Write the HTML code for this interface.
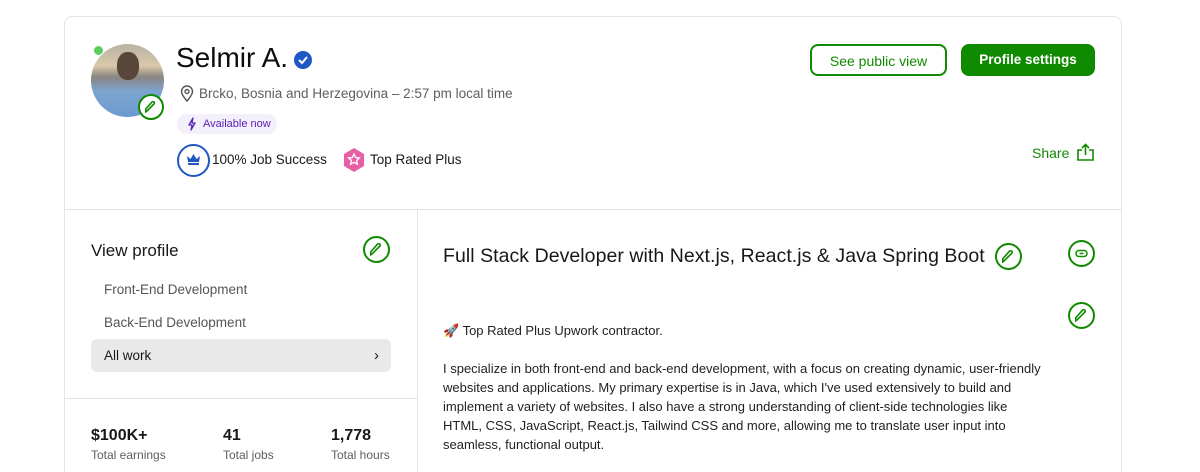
<!DOCTYPE html>
<html style="width:1200px;height:472px;overflow:hidden"><head><style>
*{box-sizing:border-box;margin:0;padding:0}
body{width:1200px;height:472px;overflow:hidden;background:#fff;font-family:"Liberation Sans",Arial,sans-serif;color:#181818;position:relative}
.card{position:absolute;left:64px;top:16px;width:1058px;height:470px;border:1px solid #e4e4e4;border-radius:8px}
.abs{position:absolute}
.pen{position:absolute;width:27px;height:27px;border:2px solid #108a00;border-radius:50%;background:#fff}
.pen svg{position:absolute;left:5px;top:5px}
.btn{position:absolute;height:32px;border-radius:8px;font-size:14px;text-align:center;line-height:30px}
.g{color:#108a00}
</style></head><body>
<div class="card"></div>
<div class="abs" style="left:64px;top:209px;width:1058px;height:1px;background:#e4e4e4"></div>
<div class="abs" style="left:417px;top:210px;width:1px;height:262px;background:#e4e4e4"></div>
<div class="abs" style="left:64px;top:398px;width:353px;height:1px;background:#e4e4e4"></div>

<div class="abs" style="left:91px;top:44px;width:73px;height:73px;border-radius:50%;background:linear-gradient(180deg,#b9b3a6 0%,#d8c8a8 30%,#8a8580 45%,#7da4cf 65%,#6b9ad0 100%)"></div>
<div class="abs" style="left:117px;top:52px;width:22px;height:28px;border-radius:45%;background:#5a4638"></div>
<div class="abs" style="left:93px;top:45px;width:11px;height:11px;border-radius:50%;background:#5ccd5c;border:1px solid #fff"></div>
<div class="pen" style="left:138px;top:94px;width:26px;height:26px"><svg width="12" height="12" viewBox="0 0 12 12"><path d="M2 10L9 3a1.4 1.4 0 0 0-2-2L0.8 8 0.5 11z" fill="none" stroke="#108a00" stroke-width="1.6"/></svg></div>

<div class="abs" style="left:176px;top:42px;font-size:28px;color:#0d0d0d">Selmir A.</div>
<svg class="abs" style="left:293px;top:50px" width="20" height="20" viewBox="0 0 20 20"><circle cx="10" cy="10" r="9" fill="#1f57c3"/><path d="M6 10l3 3 5-6" stroke="#fff" stroke-width="2" fill="none"/></svg>

<svg class="abs" style="left:180px;top:85px" width="14" height="17" viewBox="0 0 14 17"><path d="M7 16S1.5 10 1.5 6.5a5.5 5.5 0 0 1 11 0C12.5 10 7 16 7 16z" fill="none" stroke="#555" stroke-width="1.4"/><circle cx="7" cy="6.5" r="2" fill="none" stroke="#555" stroke-width="1.4"/></svg>
<div class="abs" style="left:199px;top:86px;font-size:13.5px;color:#5e5e5e">Brcko, Bosnia and Herzegovina – 2:57 pm local time</div>

<div class="abs" style="left:177px;top:114px;width:100px;height:20px;border-radius:10px;background:#f3f0fc;font-size:11px;color:#5b21b6;line-height:20px;padding-left:26px">Available now</div>
<svg class="abs" style="left:187px;top:117px" width="10" height="14" viewBox="0 0 10 14"><path d="M6 1L2 8h3l-1 5 4-7H5z" fill="none" stroke="#5b21b6" stroke-width="1.3" stroke-linejoin="round"/></svg>

<div class="abs" style="left:177px;top:144px;width:33px;height:33px;border-radius:50%;border:2px solid #1f57c3"></div>
<svg class="abs" style="left:186px;top:153px" width="15" height="13" viewBox="0 0 15 13"><path d="M1 3l3.5 3L7.5 1l3 5L14 3l-1 6H2z" fill="#1f57c3"/><rect x="2" y="10" width="11" height="2" fill="#1f57c3"/></svg>
<div class="abs" style="left:212px;top:152px;font-size:13.5px">100% Job Success</div>
<svg class="abs" style="left:342px;top:147px" width="24" height="26" viewBox="0 0 24 26"><path d="M12 1l10 6v12l-10 6L2 19V7z" fill="#e85fa8"/><path d="M12 7l1.6 3.5 3.8.4-2.8 2.6.8 3.7L12 15.3 8.6 17.2l.8-3.7-2.8-2.6 3.8-.4z" fill="none" stroke="#fff" stroke-width="1.3"/></svg>
<div class="abs" style="left:370px;top:152px;font-size:13.5px">Top Rated Plus</div>

<div class="btn g" style="left:810px;top:44px;width:137px;border:2px solid #108a00;background:#fff">See public view</div>
<div class="btn" style="left:961px;top:44px;width:134px;background:#108a00;color:#fff;border:1px solid #108a00;font-weight:bold;font-size:13.5px">Profile settings</div>

<div class="abs g" style="left:1032px;top:145px;font-size:14px">Share</div>
<svg class="abs" style="left:1076px;top:143px" width="19" height="18" viewBox="0 0 19 18"><path d="M6 7H2v10h15V7h-4M9.5 12V1.5M6 5l3.5-3.5L13 5" fill="none" stroke="#108a00" stroke-width="1.6"/></svg>

<div class="abs" style="left:91px;top:241px;font-size:17px">View profile</div>
<div class="pen" style="left:363px;top:236px"><svg width="13" height="13" viewBox="0 0 12 12"><path d="M2 10L9 3a1.4 1.4 0 0 0-2-2L0.8 8 0.5 11z" fill="none" stroke="#108a00" stroke-width="1.5"/></svg></div>
<div class="abs" style="left:104px;top:282px;font-size:13.5px;color:#555">Front-End Development</div>
<div class="abs" style="left:104px;top:315px;font-size:13.5px;color:#555">Back-End Development</div>
<div class="abs" style="left:91px;top:339px;width:300px;height:33px;background:#e9e9e9;border-radius:6px;font-size:13.5px;line-height:33px;padding-left:13px">All work<span style="position:absolute;right:12px;font-size:15px">›</span></div>

<div class="abs" style="left:91px;top:427px;font-size:16px;font-weight:bold">$100K+</div>
<div class="abs" style="left:91px;top:448px;font-size:12px;color:#5e5e5e">Total earnings</div>
<div class="abs" style="left:223px;top:427px;font-size:16px;font-weight:bold">41</div>
<div class="abs" style="left:223px;top:448px;font-size:12px;color:#5e5e5e">Total jobs</div>
<div class="abs" style="left:331px;top:427px;font-size:16px;font-weight:bold">1,778</div>
<div class="abs" style="left:331px;top:448px;font-size:12px;color:#5e5e5e">Total hours</div>

<div class="abs" style="left:443px;top:245px;font-size:19.5px;letter-spacing:0.05px;white-space:nowrap">Full Stack Developer with Next.js, React.js &amp; Java Spring Boot</div>
<div class="pen" style="left:995px;top:243px"><svg width="13" height="13" viewBox="0 0 12 12"><path d="M2 10L9 3a1.4 1.4 0 0 0-2-2L0.8 8 0.5 11z" fill="none" stroke="#108a00" stroke-width="1.5"/></svg></div>
<div class="pen" style="left:1068px;top:240px"><svg width="13" height="13" viewBox="0 0 13 13"><rect x="1" y="3.5" width="11" height="6" rx="3" fill="none" stroke="#108a00" stroke-width="1.5"/><path d="M4.5 6.5h4" stroke="#108a00" stroke-width="1.5"/></svg></div>
<div class="pen" style="left:1068px;top:302px"><svg width="13" height="13" viewBox="0 0 12 12"><path d="M2 10L9 3a1.4 1.4 0 0 0-2-2L0.8 8 0.5 11z" fill="none" stroke="#108a00" stroke-width="1.5"/></svg></div>

<div class="abs" style="left:443px;top:321px;font-size:13px;line-height:19px;color:#222;width:600px">🚀 Top Rated Plus Upwork contractor.<br><br>I specialize in both front-end and back-end development, with a focus on creating dynamic, user-friendly websites and applications. My primary expertise is in Java, which I've used extensively to build and implement a variety of websites. I also have a strong understanding of client-side technologies like HTML, CSS, JavaScript, React.js, Tailwind CSS and more, allowing me to translate user input into seamless, functional output.</div>
</body></html>
